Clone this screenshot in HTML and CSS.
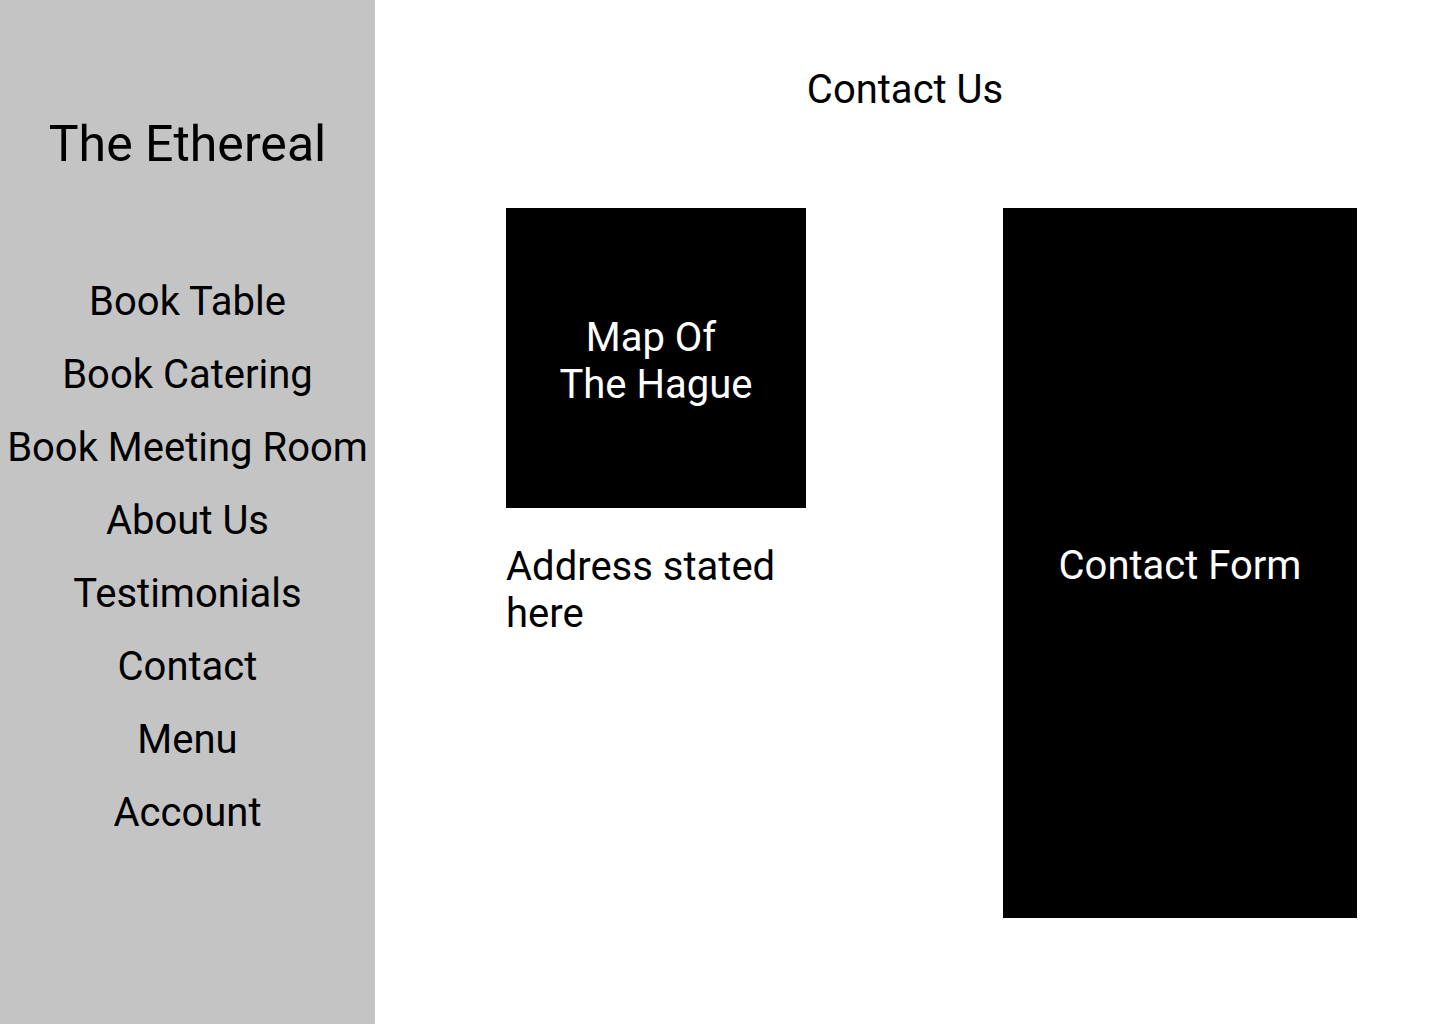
FILE: index.html
```html
<!DOCTYPE html>
<html lang="en">
<head>
<meta charset="utf-8">
<title>The Ethereal - Contact Us</title>
<link rel="stylesheet" href="styles.css">
</head>
<body>
<div class="page">
  <aside class="sidebar">
    <h1 class="brand">The Ethereal</h1>
    <nav class="nav">
      <a class="nav-item" href="#">Book Table</a>
      <a class="nav-item" href="#">Book Catering</a>
      <a class="nav-item" href="#">Book Meeting Room</a>
      <a class="nav-item" href="#">About Us</a>
      <a class="nav-item" href="#">Testimonials</a>
      <a class="nav-item" href="#">Contact</a>
      <a class="nav-item" href="#">Menu</a>
      <a class="nav-item" href="#">Account</a>
    </nav>
  </aside>
  <main class="main">
    <h2 class="page-title">Contact Us</h2>
    <div class="content">
      <div class="left-col">
        <div class="map">Map Of&nbsp;<br>The Hague</div>
        <p class="address">Address stated here</p>
      </div>
      <div class="form">Contact Form</div>
    </div>
  </main>
</div>
</body>
</html>
```

FILE: styles.css
```css
html, body {
  margin: 0;
  padding: 0;
  background: #ffffff;
}

body {
  font-family: Roboto, "Liberation Sans", sans-serif;
  color: #000000;
}

.page {
  display: flex;
  width: 1440px;
  height: 1024px;
}

.sidebar {
  width: 375px;
  flex: 0 0 375px;
  background: #c4c4c4;
  display: flex;
  flex-direction: column;
  align-items: center;
}

.brand {
  margin: 115px 0 0 0;
  font-size: 50px;
  font-weight: 400;
  line-height: 59px;
  text-align: center;
}

.nav {
  margin-top: 91px;
  display: flex;
  flex-direction: column;
  align-items: center;
}

.nav-item {
  display: block;
  font-size: 40px;
  line-height: 73px;
  color: #000000;
  text-decoration: none;
  text-align: center;
  white-space: nowrap;
}

.main {
  flex: 1 1 auto;
  display: flex;
  flex-direction: column;
}

.page-title {
  margin: 66px 0 0 0;
  padding-right: 5px;
  font-size: 40px;
  font-weight: 400;
  line-height: 47px;
  text-align: center;
}

.content {
  margin-top: 95px;
  padding-left: 131px;
  display: flex;
  gap: 197px;
}

.left-col {
  width: 300px;
  display: flex;
  flex-direction: column;
}

.map {
  box-sizing: border-box;
  width: 300px;
  height: 300px;
  padding-top: 6px;
  background: #000000;
  color: #ffffff;
  font-size: 40px;
  line-height: 47px;
  display: flex;
  align-items: center;
  justify-content: center;
  text-align: center;
}

.address {
  margin: 35px 0 0 0;
  font-size: 40px;
  line-height: 47px;
}

.form {
  box-sizing: border-box;
  width: 354px;
  height: 710px;
  padding-top: 4px;
  background: #000000;
  color: #ffffff;
  font-size: 40px;
  line-height: 47px;
  display: flex;
  align-items: center;
  justify-content: center;
}
```
